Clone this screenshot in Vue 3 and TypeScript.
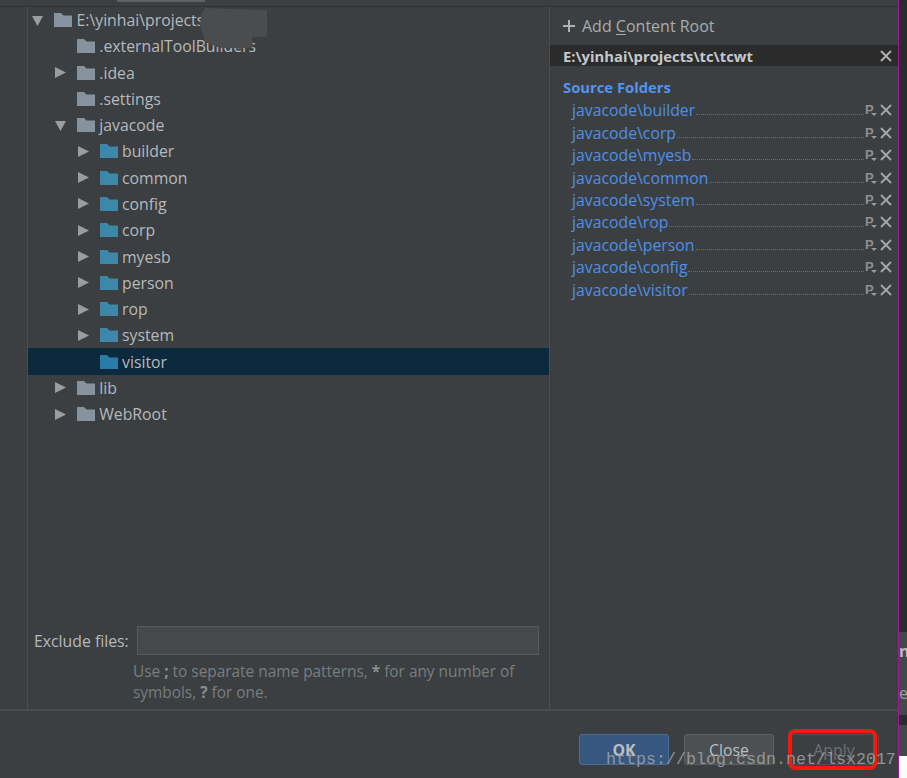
<script setup lang="ts">
interface Node { name: string; depth: number; arrow: 'none' | 'right' | 'down'; blue?: boolean; selected?: boolean }
const nodes: Node[] = [
  { name: 'E:\\yinhai\\projects', depth: 0, arrow: 'down' },
  { name: '.externalToolBuilders', depth: 1, arrow: 'none' },
  { name: '.idea', depth: 1, arrow: 'right' },
  { name: '.settings', depth: 1, arrow: 'none' },
  { name: 'javacode', depth: 1, arrow: 'down' },
  { name: 'builder', depth: 2, arrow: 'right', blue: true },
  { name: 'common', depth: 2, arrow: 'right', blue: true },
  { name: 'config', depth: 2, arrow: 'right', blue: true },
  { name: 'corp', depth: 2, arrow: 'right', blue: true },
  { name: 'myesb', depth: 2, arrow: 'right', blue: true },
  { name: 'person', depth: 2, arrow: 'right', blue: true },
  { name: 'rop', depth: 2, arrow: 'right', blue: true },
  { name: 'system', depth: 2, arrow: 'right', blue: true },
  { name: 'visitor', depth: 2, arrow: 'none', blue: true, selected: true },
  { name: 'lib', depth: 1, arrow: 'right' },
  { name: 'WebRoot', depth: 1, arrow: 'right' },
]
const sources = ['builder', 'corp', 'myesb', 'common', 'system', 'rop', 'person', 'config', 'visitor'].map(s => 'javacode\\' + s)
const indent = (d: number) => ({ paddingLeft: 3 + d * 22.75 + 'px' })
</script>

<template>
  <div class="screen">
    <div class="dialog">
      <div class="top"><span class="tab"></span></div>
      <div class="body">
        <div class="rail"></div>
        <div class="left">
          <div class="tree">
            <div v-for="n in nodes" :key="n.name" class="row" :class="{ selected: n.selected }" :style="indent(n.depth)">
              <span class="arrow">
                <svg v-if="n.arrow === 'right'" width="13" height="13" viewBox="0 0 13 13"><path d="M1 1 L12 6.5 L1 12 Z" fill="#9c9c9c" /></svg>
                <svg v-if="n.arrow === 'down'" width="13" height="13" viewBox="0 0 13 13"><path d="M1 2 L12 2 L6.5 12 Z" fill="#9c9c9c" /></svg>
              </span>
              <svg class="folder" width="18" height="14" viewBox="0 0 18 14">
                <path d="M0 0 H7 L9.5 2.5 H18 V14 H0 Z" :fill="n.selected ? '#2a7ba8' : n.blue ? '#3d88a8' : '#86939e'" />
              </svg>
              <span class="name">{{ n.name }}</span>
              <span v-if="n.depth === 0" class="blur"></span>
            </div>
          </div>
          <div class="exclude">
            <label class="ex-label">Exclude files:</label>
            <div class="ex-input"></div>
          </div>
          <p class="hint">Use <b>;</b> to separate name patterns, <b>*</b> for any number of<br />symbols, <b>?</b> for one.</p>
        </div>
        <div class="right">
          <div class="add">
            <svg class="plus" width="12" height="12" viewBox="0 0 12 12"><path d="M6 0 V12 M0 6 H12" stroke="#b0b0b0" stroke-width="2" /></svg>
            <span class="add-label">Add <u>C</u>ontent Root</span>
          </div>
          <div class="root-head">
            <span>E:\yinhai\projects\tc\tcwt</span>
            <svg class="x" width="12" height="12" viewBox="0 0 12 12"><path d="M1 1 L11 11 M11 1 L1 11" stroke="#b4b4b4" stroke-width="1.8" /></svg>
          </div>
          <div class="src-title">Source Folders</div>
          <div v-for="s in sources" :key="s" class="src">
            <span class="src-name">{{ s }}</span>
            <span class="dots"></span>
            <span class="p">P<i class="tri"></i></span>
            <svg class="x" width="12" height="12" viewBox="0 0 12 12"><path d="M1 1 L11 11 M11 1 L1 11" stroke="#a8a8a8" stroke-width="1.8" /></svg>
          </div>
        </div>
      </div>
      <div class="footer">
        <button class="btn ok">OK</button>
        <button class="btn close">Close</button>
        <button class="btn apply">Apply</button>
        <span class="redbox"></span>
      </div>
    </div>
    <div class="outside">
      <div class="out-a"></div>
      <div class="out-b"><span class="n">n</span><span class="e">e</span></div>
      <div class="out-c"></div>
      <div class="out-d"></div>
      <div class="out-e"></div>
    </div>
    <div class="mark">https://blog.csdn.net/lsx2017</div>
  </div>
</template>

<style>
html, body { margin: 0; background: #3c3f41; }
</style>

<style scoped>
.screen { position: relative; width: 907px; height: 778px; display: flex; overflow: hidden; background: #3c3f41; font-family: "Open Sans", "Noto Sans", sans-serif; }
.dialog { width: 898px; height: 778px; flex: none; display: flex; flex-direction: column; border-right: 1px solid #a3179f; box-sizing: content-box; }
.top { height: 6px; flex: none; }
.tab { display: block; width: 88px; height: 1.5px; margin-left: 117px; background: #5f6163; }
.body { flex: none; height: 702px; border-top: 1px solid #323232; border-bottom: 2px solid #4a4a4a; display: flex; }
.rail { width: 27px; border-right: 1px solid #4b4d4e; flex: none; }
.left { width: 521px; flex: none; border-right: 1px solid #4b4d4e; display: flex; flex-direction: column; }
.tree { flex: 1; }
.row { position: relative; height: 26.27px; display: flex; align-items: center; box-sizing: border-box; color: #b5b9bc; font-size: 15.8px; }
.row.selected { background: #0d293e; }
.arrow { width: 23px; flex: none; display: flex; align-items: center; }
.folder { flex: none; margin-right: 4.5px; }
.name { white-space: nowrap; }
.blur { position: absolute; z-index: 1; left: 172px; top: 1px; width: 67px; height: 40px; background: #4a4c4e; clip-path: polygon(8% 0, 100% 5%, 100% 72%, 78% 72%, 78% 100%, 30% 100%, 8% 85%, 0 45%, 2% 15%); }
.exclude { display: flex; align-items: center; padding-left: 6px; gap: 8px; margin-bottom: 6px; }
.ex-label { color: #b5b9bc; font-size: 15.8px; white-space: nowrap; }
.ex-input { width: 402px; height: 29px; box-sizing: border-box; background: #45494a; border: 1px solid #565a5c; }
.hint { margin: 0 0 6px 105px; color: #787d80; font-size: 15.4px; line-height: 21px; white-space: nowrap; }
.hint b { color: #8a8f92; }
.right { flex: 1; min-width: 0; display: flex; flex-direction: column; }
.add { height: 38px; box-sizing: border-box; padding: 0 0 0 13px; display: flex; align-items: center; gap: 7px; color: #a8adb0; font-size: 16px; }
.add-label { white-space: nowrap; }
.add u { text-underline-offset: 2px; }
.plus { flex: none; }
.root-head { height: 21px; display: flex; align-items: center; justify-content: space-between; background: #2b2b2b; color: #c4c8cb; font-size: 14.8px; font-weight: 700; padding: 0 6px 0 13px; }
.src-title { margin-top: 10px; height: 23px; padding-left: 13px; color: #5394ec; font-size: 14.8px; font-weight: 700; line-height: 22px; }
.src { height: 22.45px; display: flex; align-items: center; padding: 0 6px 0 22px; font-size: 15.8px; color: #4f8fe6; }
.src-name { white-space: nowrap; }
.dots { flex: 1; margin: 9px 1px 0; border-bottom: 1px dotted #6a6e70; }
.p { position: relative; width: 15px; color: #8f8f8f; font-size: 13px; font-weight: 700; line-height: 14px; font-family: "Liberation Sans", sans-serif; flex: none; }
.tri { position: absolute; left: 6px; top: 10px; border: 3px solid transparent; border-top-color: #9a9a9a; border-bottom: 0; }
.x { flex: none; }
.footer { position: relative; flex: 1; display: flex; justify-content: flex-end; align-items: flex-start; gap: 15px; padding: 23px 19px 0 0; }
.btn { width: 90px; height: 31px; padding: 0; border-radius: 3px; font: inherit; font-size: 15.8px; color: #bbbfc2; box-sizing: border-box; }
.ok { background: #365880; border: 1px solid #4c6d94; font-weight: 700; }
.close { background: #4c5052; border: 1px solid #5e6060; }
.apply { background: #3c3f41; border: 1px solid #4f5152; color: #6d7072; }
.redbox { position: absolute; left: 788px; top: 18px; width: 89px; height: 41px; box-sizing: border-box; border: 4px solid #f5180f; border-radius: 7px; }
.outside { flex: 1; background: #3c3f41; display: flex; flex-direction: column; position: relative; overflow: hidden; }
.out-a { height: 632px; background: #2b2b2b; flex: none; }
.out-b { height: 83px; flex: none; background: #45484a; position: relative; font-size: 16px; color: #bbb; }
.n { position: absolute; left: 0; top: 8px; font-weight: 700; }
.e { position: absolute; left: 0; top: 50px; color: #a0a0a0; }
.out-c { height: 10px; flex: none; background: #2b2b2b; }
.out-d { height: 31px; flex: none; background: #45484a; }
.out-e { flex: 1; background: #fff; }
.mark { position: absolute; left: 606px; top: 750px; color: #a5a8aa; font-family: "Liberation Mono", monospace; font-size: 16.67px; line-height: 19px; opacity: 0.8; white-space: nowrap; }
</style>
